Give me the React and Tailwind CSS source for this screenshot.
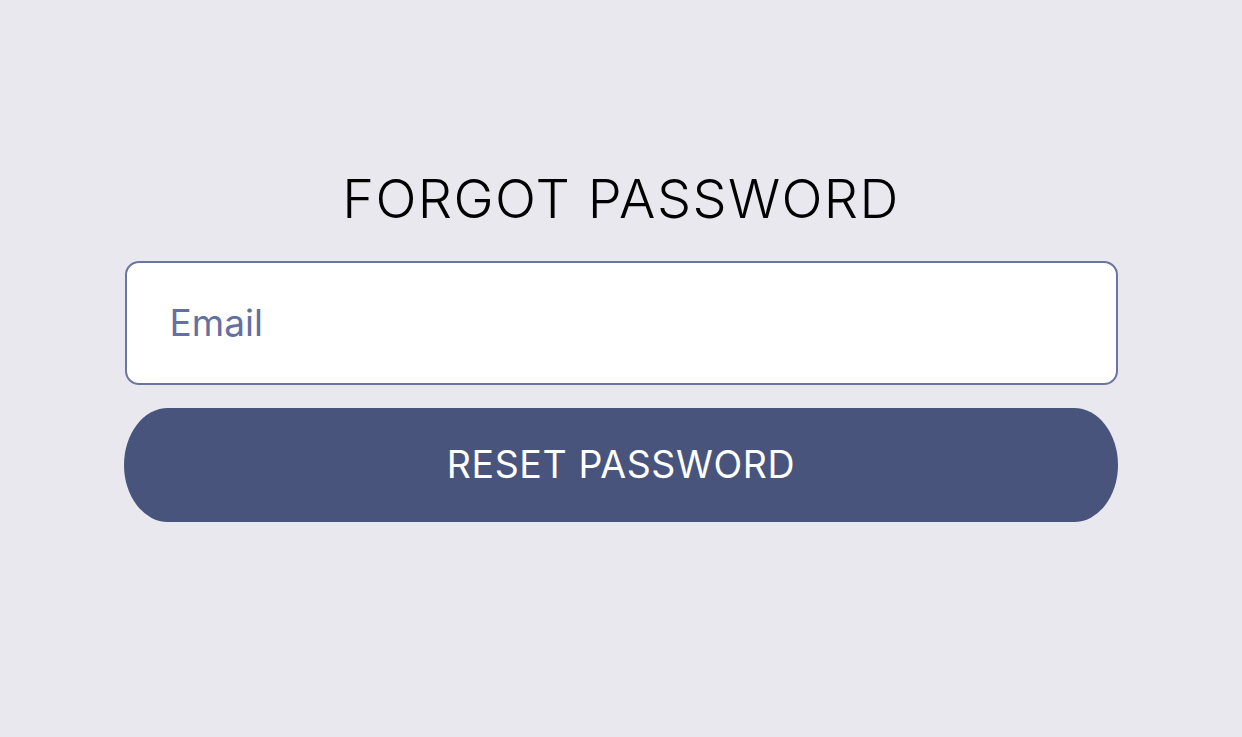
export default function App() {
  return (
    <div className="w-[1242px] h-[737px] bg-[#e9e8ef] flex flex-col items-center" style={{ fontFamily: "Inter, 'Noto Sans', sans-serif" }}>
      <h1 className="mt-[165px] text-[54px] leading-[68px] font-light text-black tracking-[1.4px]">FORGOT PASSWORD</h1>
      <div className="mt-[28px] w-[993px] h-[124px] bg-white border-2 border-[#6a76a0] rounded-[14px] flex items-center pl-[43px]">
        <span className="text-[37px] text-[#6470a0]">Email</span>
      </div>
      <button className="mt-[23px] w-[994px] h-[114px] bg-[#48547c] rounded-[44px/57px] flex items-center justify-center text-white text-[37.5px] tracking-[0.6px]">
        RESET PASSWORD
      </button>
    </div>
  );
}
